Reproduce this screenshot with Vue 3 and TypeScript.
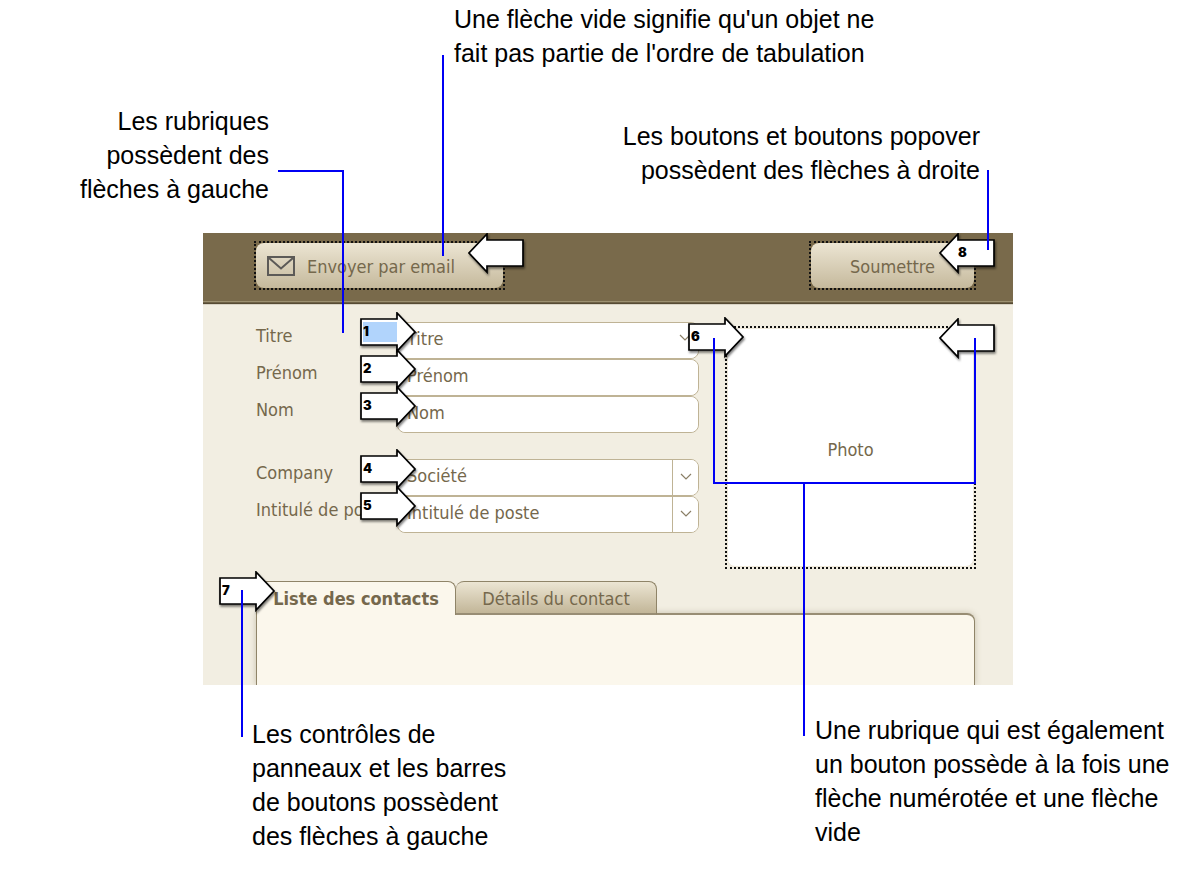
<script setup lang="ts">
import { ref } from 'vue'

interface Field {
  id: string
  label: string
  value: string
  order: number
  kind: 'menu' | 'text' | 'combo'
  active?: boolean
}

const groups: Field[][] = [
  [
    { id: 'titre', label: 'Titre', value: 'Titre', order: 1, kind: 'menu', active: true },
    { id: 'prenom', label: 'Prénom', value: 'Prénom', order: 2, kind: 'text' },
    { id: 'nom', label: 'Nom', value: 'Nom', order: 3, kind: 'text' },
  ],
  [
    { id: 'societe', label: 'Company', value: 'Société', order: 4, kind: 'combo' },
    { id: 'poste', label: 'Intitulé de poste', value: 'Intitulé de poste', order: 5, kind: 'combo' },
  ],
]

const tabs = ['Liste des contacts', 'Détails du contact']
const current = ref(0)

const notes = {
  empty: ["Une flèche vide signifie qu'un objet ne", "fait pas partie de l'ordre de tabulation"],
  fields: ['Les rubriques', 'possèdent des', 'flèches à gauche'],
  buttons: ['Les boutons et boutons popover', 'possèdent des flèches à droite'],
  panels: ['Les contrôles de', 'panneaux et les barres', 'de boutons possèdent', 'des flèches à gauche'],
  both: ['Une rubrique qui est également', 'un bouton possède à la fois une', 'flèche numérotée et une flèche', 'vide'],
}
</script>

<template>
  <main class="figure">
    <section class="notes-top">
      <p class="note note-fields"><span v-for="l in notes.fields" :key="l">{{ l }}</span></p>
      <div class="notes-main">
        <p class="note"><span v-for="l in notes.empty" :key="l">{{ l }}</span></p>
        <p class="note note-buttons"><span v-for="l in notes.buttons" :key="l">{{ l }}</span></p>
      </div>
    </section>

    <section class="layout">
      <header class="bar">
        <div class="outlined mail-box">
          <button type="button" class="action mail">
            <svg width="28" height="20" viewBox="0 0 28 20" fill="none" stroke="#5c5a57" stroke-width="2">
              <rect x="1" y="1" width="26" height="18" />
              <path d="M2 2 L14 12.5 L26 2" />
            </svg>
            <span>Envoyer par email</span>
          </button>
          <span class="arrow arrow-right">
            <svg width="58" height="42" viewBox="0 0 58 42"><path d="M55 7 H19 V1 L1 20 L19 39 V33 H55 Z" /></svg>
          </span>
          <i class="line line-mail"></i>
        </div>
        <div class="outlined submit-box">
          <button type="button" class="action">Soumettre</button>
          <span class="arrow arrow-right">
            <svg width="58" height="42" viewBox="0 0 58 42"><path d="M55 7 H19 V1 L1 20 L19 39 V33 H55 Z" /></svg>
            <b>8</b>
          </span>
          <i class="line line-submit"></i>
        </div>
      </header>

      <div class="body">
        <form class="fields" @submit.prevent>
          <div v-for="(group, g) in groups" :key="g" class="group">
            <div v-for="f in group" :key="f.id" class="row">
              <label :for="f.id">{{ f.label }}</label>
              <div class="control">
                <select v-if="f.kind === 'menu'" :id="f.id"><option>{{ f.value }}</option></select>
                <input v-else :id="f.id" type="text" :value="f.value" />
                <svg v-if="f.kind === 'menu'" class="menu-chevron" width="12" height="7" viewBox="0 0 12 7"><path d="M1 1 L6 6 L11 1" /></svg>
                <button v-if="f.kind === 'combo'" type="button" class="drop" :aria-label="f.label">
                  <svg width="12" height="7" viewBox="0 0 12 7"><path d="M1 1 L6 6 L11 1" /></svg>
                </button>
                <span class="arrow arrow-left" :class="{ active: f.active }">
                  <svg width="58" height="42" viewBox="0 0 58 42"><path d="M1 7 H37 V1 L55 20 L37 39 V33 H1 Z" /></svg>
                  <b>{{ f.order }}</b>
                </span>
              </div>
            </div>
          </div>
        </form>

        <div class="outlined photo-box">
          <button type="button" class="photo">Photo</button>
          <span class="arrow arrow-left">
            <svg width="58" height="42" viewBox="0 0 58 42"><path d="M1 7 H37 V1 L55 20 L37 39 V33 H1 Z" /></svg>
            <b>6</b>
          </span>
          <span class="arrow arrow-right">
            <svg width="58" height="42" viewBox="0 0 58 42"><path d="M55 7 H19 V1 L1 20 L19 39 V33 H55 Z" /></svg>
          </span>
          <i class="line bracket"></i>
          <i class="line line-photo"></i>
        </div>
      </div>

      <div class="tab-panel">
        <div class="tabs" role="tablist">
          <button
            v-for="(t, i) in tabs"
            :key="t"
            type="button"
            role="tab"
            class="tab"
            :class="{ selected: i === current }"
            :aria-selected="i === current"
            @click="current = i"
          >{{ t }}</button>
        </div>
        <div class="tab-content" role="tabpanel"></div>
        <span class="arrow arrow-left">
          <svg width="58" height="42" viewBox="0 0 58 42"><path d="M1 7 H37 V1 L55 20 L37 39 V33 H1 Z" /></svg>
          <b>7</b>
        </span>
        <i class="line line-tabs"></i>
      </div>
      <i class="line elbow"></i>
    </section>

    <section class="notes-bottom">
      <p class="note note-panels"><span v-for="l in notes.panels" :key="l">{{ l }}</span></p>
      <p class="note note-both"><span v-for="l in notes.both" :key="l">{{ l }}</span></p>
    </section>
  </main>
</template>

<style>
body {
  margin: 0;
  background: #fff;
}
</style>

<style scoped>
* {
  box-sizing: border-box;
}
.figure {
  font-family: "DejaVu Sans Condensed", "DejaVu Sans", sans-serif;
  font-size: 18px;
  color: #75684c;
  overflow: hidden;
}
button,
input,
select {
  font: inherit;
  color: inherit;
  margin: 0;
}
.note {
  margin: 0;
  font: 25px/34px "Liberation Sans", Arial, sans-serif;
  color: #000;
  white-space: nowrap;
}
.note span {
  display: block;
}
.notes-top {
  display: flex;
  min-height: 233px;
}
.note-fields {
  width: 269px;
  padding-top: 104px;
  text-align: right;
}
.notes-main {
  flex: 1;
  display: flex;
  flex-direction: column;
  gap: 49px;
  padding: 2px 216px 0 185px;
}
.note-buttons {
  align-self: flex-end;
  text-align: right;
}
.layout {
  position: relative;
  margin: 0 183px 0 203px;
  background: #f2eee2;
}
.bar {
  display: flex;
  justify-content: space-between;
  padding: 8px 37px 11px 51px;
  background: #796a4b;
  border-bottom: 1px solid #9c9070;
  box-shadow: 0 1px 0 #6d6045, 0 2px 0 #554a33, 0 3px 0 #d9d3c5;
}
.outlined {
  position: relative;
  border: 2px dotted #111;
}
.mail-box {
  width: 251px;
}
.submit-box {
  width: 167px;
}
.action {
  display: flex;
  align-items: center;
  justify-content: center;
  width: 100%;
  height: 45px;
  padding: 1px 0 0;
  border: 0;
  border-radius: 8px;
  background: linear-gradient(#ece5d3, #c5b99c);
}
.mail {
  justify-content: flex-start;
  gap: 12px;
  padding-left: 11px;
}
.body {
  display: flex;
  gap: 26px;
  padding: 20px 37px 0 53px;
}
.fields {
  flex: 1;
  display: flex;
  flex-direction: column;
  gap: 26px;
}
.group {
  display: flex;
  flex-direction: column;
}
.row {
  display: flex;
}
.row label {
  width: 141px;
  line-height: 28px;
  white-space: nowrap;
}
.control {
  position: relative;
  flex: 1;
  display: flex;
  min-width: 0;
  height: 37px;
  border: 1px solid #bfb395;
  border-radius: 8px;
  background: #fff;
}
.control input,
.control select {
  flex: 1;
  min-width: 0;
  padding: 0 9px 4px;
  border: 0;
  border-radius: 8px;
  background: #fff;
  appearance: none;
}
.drop {
  width: 26px;
  padding: 0 0 8px;
  border: 0;
  border-left: 1px solid #bfb395;
  border-radius: 0 7px 7px 0;
  background: #fff;
}
.drop path,
.menu-chevron path {
  fill: none;
  stroke: #8a7e66;
  stroke-width: 1.2;
}
.menu-chevron {
  position: absolute;
  right: 7px;
  top: 11px;
}
.arrow {
  position: absolute;
  z-index: 2;
  width: 56px;
  height: 40px;
  color: #000;
  font: bold 13px/40px Inter, "Liberation Sans", sans-serif;
}
.arrow svg {
  position: absolute;
  left: 0;
  top: 0;
  filter: drop-shadow(1px 2px 1px rgba(0, 0, 0, 0.5));
}
.arrow path {
  fill: #fff;
  stroke: #000;
  stroke-width: 1.7;
}
.arrow b {
  position: relative;
  display: block;
  height: 38px;
  line-height: 38px;
}
.arrow-left {
  left: -39px;
  top: -11px;
}
.control .arrow-left {
  left: -38px;
}
.arrow-left b {
  padding-left: 3px;
}
.active::before {
  content: "";
  position: absolute;
  z-index: 1;
  left: 3px;
  top: 10px;
  width: 34px;
  height: 20px;
  background: #b1d4fc;
}
.active b {
  z-index: 2;
}
.arrow-right {
  right: -21px;
  top: -10px;
}
.arrow-right b {
  padding-left: 19px;
}
.photo-box {
  width: 251px;
  height: 243px;
  margin-top: 4px;
}
.photo {
  display: block;
  width: 100%;
  height: 100%;
  padding: 3px 0 0;
  border: 1px solid #eee8da;
  border-radius: 8px;
  background: #fff;
}
.tab-panel {
  position: relative;
  padding: 12px 38px 0 53px;
}
.tabs {
  position: relative;
  z-index: 1;
  display: flex;
}
.tab {
  width: 201px;
  height: 34px;
  padding: 2px 0 0;
  border: 1px solid #8f8468;
  border-bottom: 2px solid #988d74;
  border-left-width: 0;
  border-radius: 8px 8px 0 0;
  background: linear-gradient(#ece5d3, #c2b698);
}
.tab.selected {
  width: 200px;
  border-left-width: 1px;
  border-bottom: 0;
  padding-bottom: 2px;
  background: #fbf7ec;
  font-weight: bold;
}
.tab-content {
  height: 72px;
  margin-top: -2px;
  border: 1px solid #8f8468;
  border-top: 2px solid #988d74;
  border-bottom: 0;
  border-radius: 0 8px 0 0;
  background: #fbf7ec;
  box-shadow: 0 0 6px rgba(100, 85, 50, 0.3);
  clip-path: inset(-8px -8px 0 -8px);
}
.tab-panel .arrow {
  left: 16px;
  top: 2px;
}
.line {
  position: absolute;
  z-index: 3;
  width: 2px;
  background: #0000f4;
  pointer-events: none;
}
.line-mail {
  left: 186px;
  top: -188px;
  height: 201px;
}
.line-submit {
  right: -15px;
  top: -73px;
  height: 80px;
}
.bracket {
  left: -14px;
  right: -2px;
  top: 10px;
  width: auto;
  height: 146px;
  border: 2px solid #0000f4;
  border-top: 0;
  background: none;
}
.line-photo {
  left: 76px;
  top: 155px;
  height: 253px;
}
.line-tabs {
  left: 38px;
  top: 21px;
  height: 147px;
}
.elbow {
  left: 75px;
  top: -63px;
  width: 66px;
  height: 163px;
  border: solid #0000f4;
  border-width: 2px 2px 0 0;
  background: none;
}
.notes-bottom {
  display: flex;
  justify-content: space-between;
  padding: 28px 21px 35px 252px;
}
.note-panels {
  padding-top: 4px;
}
.note-both {
  width: 360px;
}
</style>
